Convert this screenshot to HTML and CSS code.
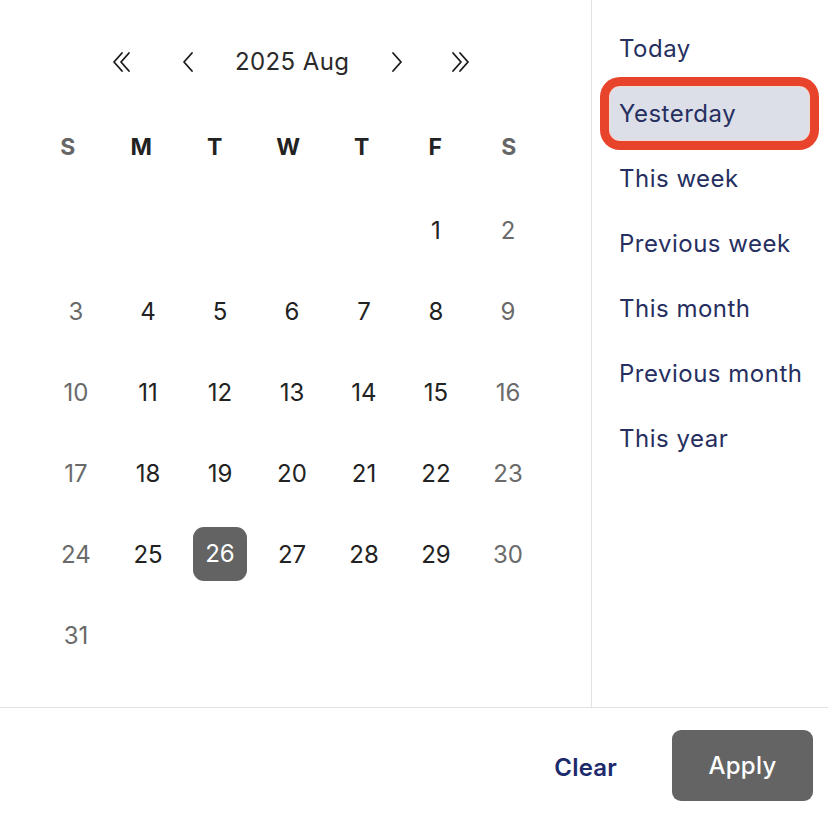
FILE: index.html
```html
<!DOCTYPE html>
<html>
<head>
<meta charset="utf-8">
<link rel="stylesheet" href="styles.css">
</head>
<body>
<div class="picker">
  <div class="main">
    <div class="cal">
      <div class="nav">
        <span class="ico ico-dl"><svg width="24" height="24" viewBox="0 0 24 24"><path d="M12 3 L4 12 L12 21 M19 3 L11 12 L19 21" fill="none" stroke="#1a1a1a" stroke-width="1.8" stroke-linecap="round" stroke-linejoin="round"/></svg></span>
        <span class="ico ico-l"><svg width="24" height="24" viewBox="0 0 24 24"><path d="M16 3 L8 12 L16 21" fill="none" stroke="#1a1a1a" stroke-width="1.8" stroke-linecap="round" stroke-linejoin="round"/></svg></span>
        <span class="title">2025 Aug</span>
        <span class="ico ico-r"><svg width="24" height="24" viewBox="0 0 24 24"><path d="M8 3 L16 12 L8 21" fill="none" stroke="#1a1a1a" stroke-width="1.8" stroke-linecap="round" stroke-linejoin="round"/></svg></span>
        <span class="ico ico-dr"><svg width="24" height="24" viewBox="0 0 24 24"><path d="M5 3 L13 12 L5 21 M12 3 L20 12 L12 21" fill="none" stroke="#1a1a1a" stroke-width="1.8" stroke-linecap="round" stroke-linejoin="round"/></svg></span>
      </div>
      <div class="weekdays">
        <span class="wd we">S</span><span class="wd">M</span><span class="wd">T</span><span class="wd">W</span><span class="wd">T</span><span class="wd">F</span><span class="wd we">S</span>
      </div>
      <div class="days">
        <span></span><span></span><span></span><span></span><span></span><span class="d">1</span><span class="d we">2</span>
        <span class="d we">3</span><span class="d">4</span><span class="d">5</span><span class="d">6</span><span class="d">7</span><span class="d">8</span><span class="d we">9</span>
        <span class="d we">10</span><span class="d">11</span><span class="d">12</span><span class="d">13</span><span class="d">14</span><span class="d">15</span><span class="d we">16</span>
        <span class="d we">17</span><span class="d">18</span><span class="d">19</span><span class="d">20</span><span class="d">21</span><span class="d">22</span><span class="d we">23</span>
        <span class="d we">24</span><span class="d">25</span><span class="d"><span class="sel">26</span></span><span class="d">27</span><span class="d">28</span><span class="d">29</span><span class="d we">30</span>
        <span class="d we">31</span>
      </div>
    </div>
    <div class="side">
      <div class="opt">Today</div>
      <div class="opt active">Yesterday</div>
      <div class="opt">This week</div>
      <div class="opt">Previous week</div>
      <div class="opt">This month</div>
      <div class="opt">Previous month</div>
      <div class="opt">This year</div>
    </div>
  </div>
  <div class="footer">
    <button class="clear">Clear</button>
    <button class="apply">Apply</button>
  </div>
</div>
</body>
</html>
```
FILE: styles.css
```css
* { box-sizing: border-box; }
html, body { margin: 0; padding: 0; background: #fff; }
body { font-family: Inter, "Noto Sans", sans-serif; width: 828px; height: 818px; overflow: hidden; }
.picker { width: 828px; height: 818px; display: flex; flex-direction: column; }
.main { display: flex; height: 708px; border-bottom: 1px solid #e2e2e2; }
.cal { width: 592px; border-right: 1px solid #e2e2e2; }
.nav { display: flex; align-items: center; height: 40px; margin-top: 42px; padding-left: 110px; }
.ico { width: 24px; height: 24px; display: flex; }
.ico-l { margin-left: 42px; }
.title { margin-left: 35px; width: 114px; font-size: 24px; color: #2a2a2a; line-height: 40px; white-space: nowrap; letter-spacing: 0.4px; }
.ico-r { margin-left: 36px; }
.ico-dr { margin-left: 39px; }
.weekdays { display: grid; grid-template-columns: repeat(7, 73.5px); margin-left: 31px; margin-top: 45px; height: 40px; align-items: center; }
.wd { text-align: center; font-size: 23px; font-weight: 700; color: #222; }
.wd.we { color: #666; }
.days { display: grid; grid-template-columns: repeat(7, 72px); grid-auto-rows: 81px; margin-left: 40px; margin-top: 23px; }
.d { display: flex; align-items: center; justify-content: center; font-size: 24px; color: #222; }
.d.we { color: #6a6a6a; }
.sel { width: 54px; height: 54px; border-radius: 11px; background: #636363; color: #fff; display: flex; align-items: center; justify-content: center; margin-top: -2px; }
.side { flex: 1; padding-top: 22px; padding-left: 18px; display: flex; flex-direction: column; gap: 12px; }
.opt { width: 199px; height: 53px; padding-left: 9px; display: flex; align-items: center; font-size: 24px; color: #262f5f; border-radius: 10px; white-space: nowrap; letter-spacing: 0.5px; }
.opt.active { background: #dcdfe8; box-shadow: 0 0 0 1px #f3d9d4, 0 0 0 10px #e8432b; }
.footer { flex: 1; display: flex; align-items: center; justify-content: flex-end; padding-right: 15px; padding-top: 4px; }
.clear { border: 0; background: none; font-family: inherit; font-size: 24px; font-weight: 600; color: #1c2a6c; padding: 0; margin-right: 55px; margin-top: 4px; letter-spacing: 0.2px; }
.apply { border: 0; width: 141px; height: 71px; border-radius: 9px; background: #646464; color: #fff; font-family: inherit; font-size: 24px; font-weight: 500; letter-spacing: 0.3px; }
```
